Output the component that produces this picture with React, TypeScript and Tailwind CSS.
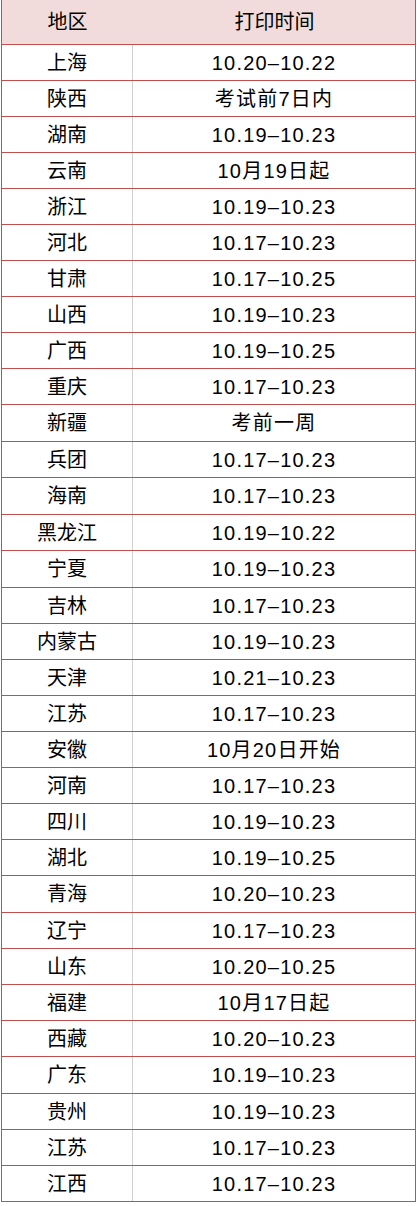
import React from "react";

const rows: [string, string][] = [
  ["上海", "10.20–10.22"],
  ["陕西", "考试前7日内"],
  ["湖南", "10.19–10.23"],
  ["云南", "10月19日起"],
  ["浙江", "10.19–10.23"],
  ["河北", "10.17–10.23"],
  ["甘肃", "10.17–10.25"],
  ["山西", "10.19–10.23"],
  ["广西", "10.19–10.25"],
  ["重庆", "10.17–10.23"],
  ["新疆", "考前一周"],
  ["兵团", "10.17–10.23"],
  ["海南", "10.17–10.23"],
  ["黑龙江", "10.19–10.22"],
  ["宁夏", "10.19–10.23"],
  ["吉林", "10.17–10.23"],
  ["内蒙古", "10.19–10.23"],
  ["天津", "10.21–10.23"],
  ["江苏", "10.17–10.23"],
  ["安徽", "10月20日开始"],
  ["河南", "10.17–10.23"],
  ["四川", "10.19–10.23"],
  ["湖北", "10.19–10.25"],
  ["青海", "10.20–10.23"],
  ["辽宁", "10.17–10.23"],
  ["山东", "10.20–10.25"],
  ["福建", "10月17日起"],
  ["西藏", "10.20–10.23"],
  ["广东", "10.19–10.23"],
  ["贵州", "10.19–10.23"],
  ["江苏", "10.17–10.23"],
  ["江西", "10.17–10.23"],
];

const tall = new Set([10, 12, 14, 23, 28]);

export default function App() {
  return (
    <div
      className="w-[417px] bg-white text-[20px] text-black"
      style={{ fontFamily: '"Liberation Sans", "Noto Sans CJK SC", sans-serif' }}
    >
      <div className="ml-[1px] w-[415px] border-x border-[#c0504d]">
        <div className="flex h-[45px] border-b border-[#c0504d] bg-[#f2dcdb]">
          <div className="flex w-[131px] items-center justify-center">地区</div>
          <div className="flex flex-1 items-center justify-center pl-[1px]">打印时间</div>
        </div>
        {rows.map(([a, b], i) => (
          <div
            key={i}
            className={
              (tall.has(i) ? "h-[37px] " : "h-[36px] ") +
              "flex border-b border-[#c0504d]"
            }
          >
            <div className="flex w-[131px] items-center justify-center border-r border-[#d0d0d0]">
              {a}
            </div>
            <div className="flex flex-1 items-center justify-center tracking-[1.2px]">
              {b}
            </div>
          </div>
        ))}
      </div>
    </div>
  );
}
